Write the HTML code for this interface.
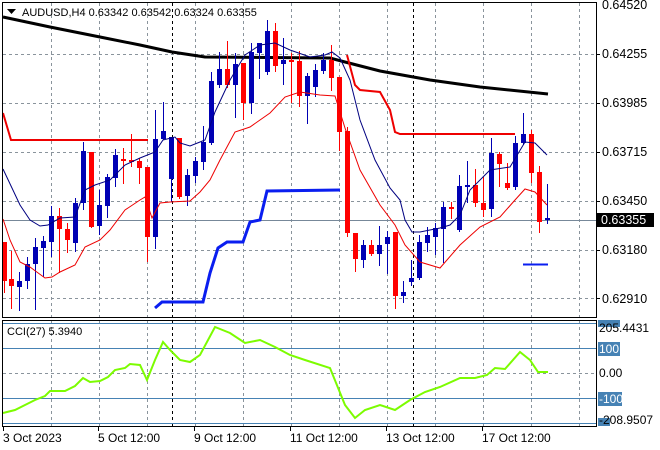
<!DOCTYPE html>
<html><head><meta charset="utf-8"><style>
html,body{margin:0;padding:0;background:#fff;width:660px;height:450px;overflow:hidden}
svg{display:block}
text{font-family:"Liberation Sans",sans-serif;font-size:11px;fill:#000}
text.ax{font-size:12px}
text.px{font-size:12.5px}
</style></head><body>
<svg id="s" width="660" height="450" xmlns="http://www.w3.org/2000/svg">
<rect width="660" height="450" fill="#fff"/>
<g id="grid" stroke="#8a949c" stroke-dasharray="3,3" stroke-width="1"></g>
<line x1="172.5" y1="3" x2="172.5" y2="426" stroke="#000" stroke-dasharray="3,3"/>
<line x1="413.5" y1="3" x2="413.5" y2="426" stroke="#000" stroke-dasharray="3,3"/>
<line x1="3" y1="220.5" x2="597" y2="220.5" stroke="#778899"/>
<g stroke="#4682b4" stroke-width="1">
<line x1="3" y1="323.5" x2="597" y2="323.5"/>
<line x1="3" y1="348.5" x2="597" y2="348.5"/>
<line x1="3" y1="398.5" x2="597" y2="398.5"/>
<line x1="3" y1="423.5" x2="597" y2="423.5"/>
</g>
<line x1="3" y1="373.5" x2="597" y2="373.5" stroke="#8a949c" stroke-dasharray="3,3"/>
<polyline fill="none" stroke="#000" stroke-width="3" points="3,17 50,27 100,37 140,45 172,52 205,57 330,58 345,62 380,71 430,80 480,87 548,94"/>
<polyline fill="none" stroke="#e00" stroke-width="2" points="3,113 11,140 148,140"/>
<polyline fill="none" stroke="#e00" stroke-width="2" points="347,55 355,85 360,90 380,92 390,110 395,132 400,134 515,134"/>
<polyline fill="none" stroke="#0a1ef0" stroke-width="3" points="155,308 162,302 203,302 210,273 218,248 227,242 243,242 250,222 260,220 267,191 340,190"/>
<line x1="523" y1="264.5" x2="548" y2="264.5" stroke="#0a1ef0" stroke-width="2"/>
<g id="candles"></g>
<polyline fill="none" stroke="#000080" stroke-width="1" points="3,169 20,205 30,220 40,226 48,225 60,218 75,217 85,190 95,185 110,180 125,165 140,158 155,152 163,140 175,137 180,143 190,146 200,142 205,140 215,112 230,80 245,55 260,45 275,43 290,50 310,57 325,55 332,52 340,58 350,80 360,120 375,160 390,188 400,200 405,220 412,232 420,232 440,228 450,225 460,215 470,190 490,170 510,167 525,142 535,143 547,155"/>
<polyline fill="none" stroke="#e00" stroke-width="1" points="3,219 10,240 20,262 30,267 45,278 52,277 60,272 75,265 85,247 100,240 110,230 125,210 140,200 145,197 152,218 160,203 170,202 190,201 200,192 210,180 220,160 235,132 250,127 270,113 285,97 300,92 320,95 335,96 345,128 360,170 380,205 395,225 405,245 420,262 440,268 460,245 480,227 500,217 515,200 525,189 535,192 547,205"/>
<polyline fill="none" stroke="#7cfc00" stroke-width="2" points="3,413 15,410 25,405 35,400 45,396 50,391 65,391 75,386 83,378 90,382 100,381 108,377 115,370 125,368 130,364 140,365 147,380 155,360 163,342 170,350 180,360 190,362 200,355 215,327 230,333 245,343 260,340 275,347 290,355 305,360 330,368 345,405 355,418 365,410 380,405 395,410 410,400 425,392 440,387 460,378 475,378 487,375 495,368 505,369 520,352 530,360 538,372 548,372"/>
<rect x="2.5" y="2.5" width="594" height="315" fill="none" stroke="#000"/>
<rect x="2.5" y="320.5" width="594" height="106" fill="none" stroke="#000"/>
<polygon points="7,9 16,9 11.5,14" fill="#000"/>
<text x="22" y="16">AUDUSD,H4  0.63342 0.63542 0.63324 0.63355</text>
<text x="7" y="335">CCI(27) 5.3940</text>
<g id="ticks" stroke="#000"></g>
<text class="px" x="602" y="9">0.64520</text>
<text class="px" x="602" y="58">0.64255</text>
<text class="px" x="602" y="107">0.63985</text>
<text class="px" x="602" y="156">0.63715</text>
<text class="px" x="602" y="205">0.63450</text>
<rect x="597" y="213" width="57" height="14" fill="#000"/>
<text class="px" x="601" y="224" style="fill:#fff">0.63355</text>
<text class="px" x="602" y="254">0.63180</text>
<text class="px" x="602" y="303">0.62910</text>
<rect x="598" y="320" width="22" height="7" fill="#4682b4"/>
<text class="ax" x="599" y="332">205.4431</text>
<rect x="598" y="342" width="22" height="14" fill="#4682b4"/>
<text class="ax" x="599" y="353" style="fill:#fff">100</text>
<text class="ax" x="599" y="377">0.00</text>
<rect x="598" y="392" width="24" height="14" fill="#4682b4"/>
<text class="ax" x="599" y="403" style="fill:#fff">-100</text>
<rect x="598" y="418" width="12" height="8" fill="#4682b4"/>
<text class="ax" x="599" y="424">-208.9507</text>
<text class="ax" x="3" y="442">3 Oct 2023</text>
<text class="ax" x="98" y="442">5 Oct 12:00</text>
<text class="ax" x="194" y="442">9 Oct 12:00</text>
<text class="ax" x="290" y="442">11 Oct 12:00</text>
<text class="ax" x="386" y="442">13 Oct 12:00</text>
<text class="ax" x="482" y="442">17 Oct 12:00</text>
</svg>
<script>
var NS="http://www.w3.org/2000/svg",g=document.getElementById('grid'),c=document.getElementById('candles'),tk=document.getElementById('ticks');
function el(p,t,a){var e=document.createElementNS(NS,t);for(var k in a)e.setAttribute(k,a[k]);p.appendChild(e);return e;}
for(var x=51;x<597;x+=48){if(x==171)continue;el(g,'line',{x1:x+.5,y1:3,x2:x+.5,y2:426});}
[54,103,152,201,250,298].forEach(function(y){el(g,'line',{x1:3,y1:y+.5,x2:597,y2:y+.5});el(tk,'line',{x1:597,y1:y+.5,x2:600,y2:y+.5});});
[3,98,194,290,386,482].forEach(function(x){el(tk,'line',{x1:x+.5,y1:427,x2:x+.5,y2:431});});
var d=[[4,242,293,242,281,'r'],[11,251,309,279,286,'r'],[19,272,311,281,287,'b'],[27,257,289,264,281,'b'],[35,238,310,247,264,'b'],[43,236,277,241,248,'b'],[51,206,257,216,242,'b'],[59,208,273,216,229,'r'],[67,223,253,229,240,'r'],[75,198,252,203,243,'b'],[83,142,210,151,203,'b'],[91,152,228,152,227,'r'],[99,190,235,205,226,'b'],[107,174,218,177,206,'b'],[115,149,187,155,178,'b'],[123,148,184,159,161,'r'],[131,134,167,160,161,'r'],[139,158,184,161,168,'r'],[147,167,262,167,237,'r'],[155,110,249,139,237,'b'],[163,102,140,131,139,'b'],[171,137,202,137,179,'b'],[179,138,199,138,197,'r'],[187,169,206,175,196,'b'],[195,157,183,161,176,'b'],[203,126,170,142,162,'b'],[211,72,145,81,143,'b'],[219,52,88,69,85,'b'],[227,41,88,69,85,'r'],[235,53,118,64,85,'b'],[243,63,120,63,103,'r'],[251,43,114,52,103,'b'],[259,43,79,43,53,'b'],[267,20,75,31,72,'b'],[275,23,72,31,66,'r'],[283,38,85,60,64,'b'],[291,53,103,60,62,'r'],[299,51,107,61,96,'r'],[307,73,124,76,96,'b'],[315,64,97,70,87,'b'],[323,53,74,60,71,'b'],[331,45,91,60,78,'r'],[339,77,151,77,132,'r'],[347,127,237,131,233,'r'],[355,233,272,233,259,'r'],[363,240,268,245,260,'b'],[371,240,256,245,254,'r'],[379,226,266,245,254,'b'],[387,231,274,237,244,'b'],[395,232,309,232,296,'r'],[403,281,303,292,296,'b'],[411,260,286,278,282,'b'],[419,235,280,242,278,'b'],[427,227,252,235,243,'b'],[435,223,255,228,237,'b'],[443,202,263,207,229,'b'],[451,202,219,207,208,'r'],[459,175,232,186,230,'b'],[467,161,203,185,187,'b'],[475,169,207,185,203,'r'],[483,177,217,203,210,'r'],[491,138,217,153,209,'b'],[499,152,187,154,164,'r'],[507,163,190,183,188,'r'],[515,136,190,143,187,'b'],[523,113,145,134,143,'b'],[531,130,183,134,173,'r'],[539,166,233,172,222,'r'],[547,184,224,218,220,'b']];
d.forEach(function(k){var col=k[5]=='r'?'#f00':'#0000b4';el(c,'line',{x1:k[0]+.5,y1:k[1],x2:k[0]+.5,y2:k[2],stroke:col});el(c,'rect',{x:k[0]-2,y:k[3],width:5,height:Math.max(2,k[4]-k[3]),fill:col});});
</script>
</body></html>
